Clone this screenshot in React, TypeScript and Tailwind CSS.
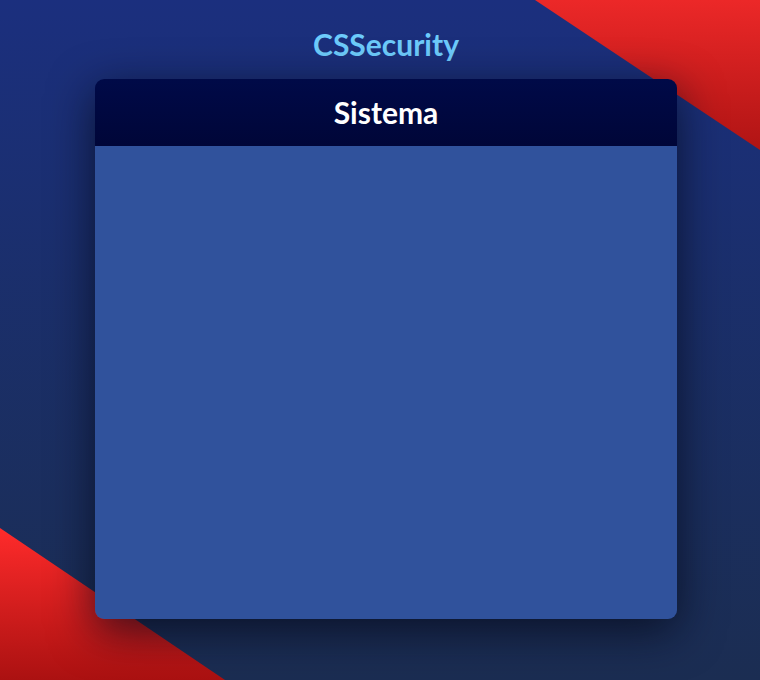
export default function App() {
  return (
    <div
      className="relative h-[680px] w-[760px] overflow-hidden bg-gradient-to-b from-[#1b2f7e] to-[#1b2d52]"
      style={{ fontFamily: "Lato, 'Open Sans', sans-serif" }}
    >
      {/* red corner shapes */}
      <div className="absolute left-[535px] top-0 h-[150px] w-[225px] bg-gradient-to-b from-[#ec2828] to-[#b01414] [clip-path:polygon(0_0,100%_0,100%_100%)]" />
      <div className="absolute left-0 top-[528px] h-[152px] w-[225px] bg-gradient-to-b from-[#ff2b2b] to-[#ab1111] [clip-path:polygon(0_0,100%_100%,0_100%)]" />

      <div className="relative flex flex-col pl-[95px] pt-[26px]">
        <h1 className="w-[582px] text-center text-[30px] font-bold leading-[36px] text-[#6dcbfb]">
          CSSecurity
        </h1>

        <section className="mt-[17px] flex h-[540px] w-[582px] flex-col overflow-hidden rounded-[9px] shadow-[0_12px_45px_rgba(5,10,25,0.75)]">
          <header className="flex h-[67px] items-center justify-center bg-gradient-to-b from-[#000a48] to-[#000638]">
            <h2 className="text-[30px] font-bold text-white">Sistema</h2>
          </header>
          <div className="flex-1 bg-[#30529c]" />
        </section>
      </div>
    </div>
  );
}
